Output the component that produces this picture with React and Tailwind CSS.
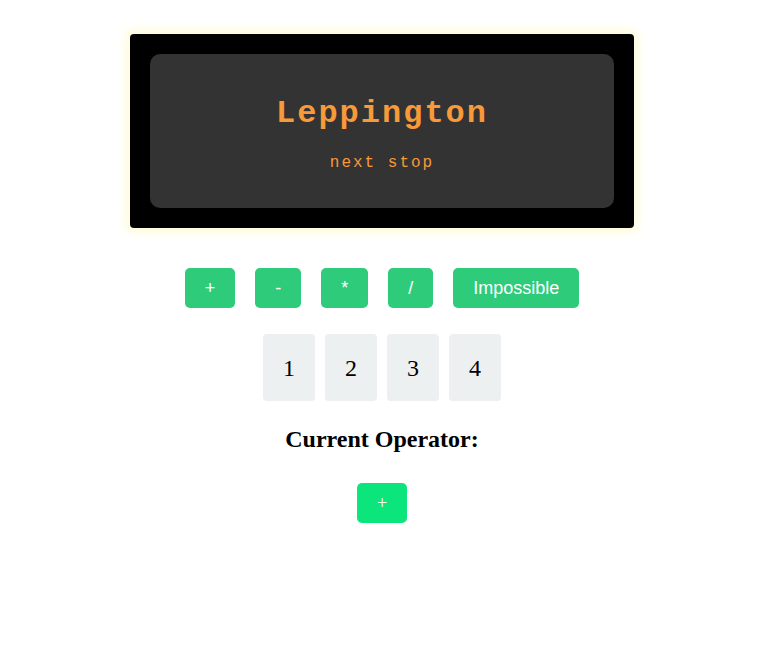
import React, { useState } from 'react';

const ops = ['+', '-', '*', '/', 'Impossible'];
const nums = [1, 2, 3, 4];

const App = () => {
    const [op, setOp] = useState('+');

    return (
        <div className="w-[764px] flex flex-col items-center pt-[34px]">
            <div className="w-[504px] h-[194px] p-5 bg-black rounded-[4px] shadow-[0_0_10px_4px_rgba(255,250,205,0.8)]">
                <div className="h-full bg-[#333333] rounded-[10px] flex flex-col items-center pt-[40px]">
                    <h1 className="font-['Courier_New','Liberation_Mono',monospace] font-bold text-[32px] leading-[40px] tracking-[2px] text-[#f8993a]">
                        Leppington
                    </h1>
                    <p className="mt-[19px] font-['Courier_New','Liberation_Mono',monospace] text-[16px] leading-[20px] tracking-[2px] text-[#f8993a]">
                        next stop
                    </p>
                </div>
            </div>

            <div className="mt-[30px] flex">
                {ops.map((o) => (
                    <button
                        key={o}
                        onClick={() => setOp(o)}
                        className="m-[10px] px-5 py-1.5 h-10 text-[18px] leading-7 text-white bg-[#2ecc7a] rounded-[5px] font-['Liberation_Sans',Arial,sans-serif]"
                    >
                        {o}
                    </button>
                ))}
            </div>

            <div className="mt-[16px] flex gap-[10px]">
                {nums.map((n) => (
                    <div
                        key={n}
                        className="w-[52px] h-[67px] flex items-center justify-center bg-[#ecf0f1] rounded-[4px] font-['Liberation_Serif',serif] text-[24px]"
                    >
                        {n}
                    </div>
                ))}
            </div>

            <h2 className="mt-[20px] font-['Liberation_Serif',serif] font-bold text-[24px] leading-[36px]">
                Current Operator:
            </h2>

            <div className="mt-[26px] w-[50px] h-[40px] flex items-center justify-center bg-[#0be57b] rounded-[5px] text-white text-[18px] font-['Liberation_Serif',serif]">
                {op}
            </div>
        </div>
    );
};

export default App;
